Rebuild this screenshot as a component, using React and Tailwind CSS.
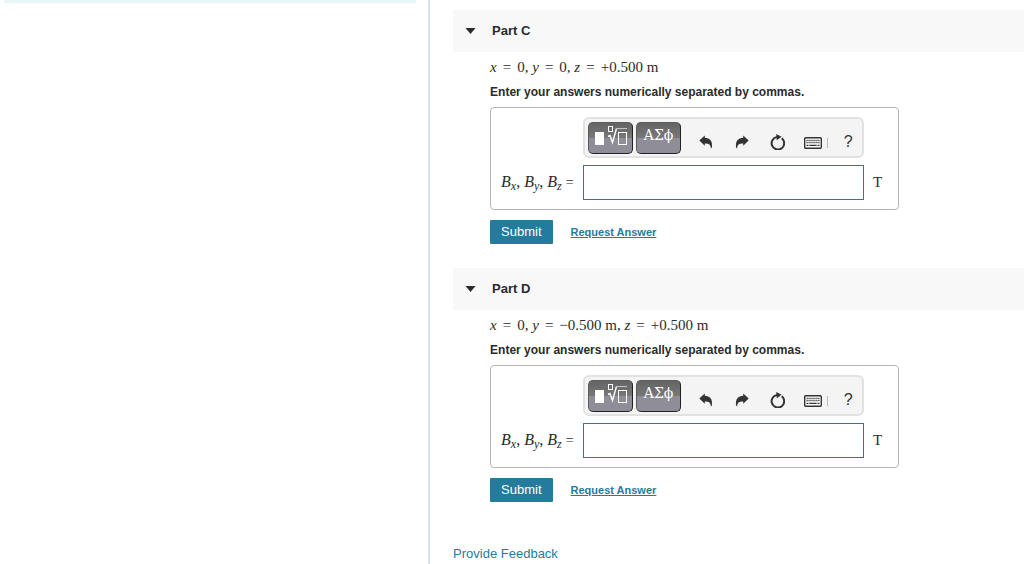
import { useState } from 'react'

const parts = [
  {
    id: 'c',
    title: 'Part C',
    given: [
      { name: 'x', value: '0' },
      { name: 'y', value: '0' },
      { name: 'z', value: '+0.500 m' },
    ],
  },
  {
    id: 'd',
    title: 'Part D',
    given: [
      { name: 'x', value: '0' },
      { name: 'y', value: '−0.500 m' },
      { name: 'z', value: '+0.500 m' },
    ],
  },
]

function UndoIcon({ className }) {
  return (
    <svg viewBox="0 0 14 14" className={className} fill="currentColor" aria-hidden="true">
      <path d="M.3 5.400 5.800.4v2.400c5 .1 8 3.200 7.100 9.700l-1.100 1C12 9.800 9.800 8.500 5.800 8.500v2.200z" />
    </svg>
  )
}

function ResetIcon() {
  return (
    <svg viewBox="0 0 16 16" className="size-4" aria-hidden="true">
      <path d="M12.700 4.200A6.300 6.300 0 1 1 8 3" fill="none" stroke="currentColor" strokeWidth="2" />
      <path d="M7.200 0 12.600 2.800 7.800 6.300z" fill="currentColor" />
    </svg>
  )
}

function KeyboardIcon() {
  return (
    <svg viewBox="0 0 18 12" className="h-3 w-[18px]" aria-hidden="true">
      <rect x=".7" y=".7" width="16.600" height="10.600" rx="1" fill="#fff" stroke="currentColor" strokeWidth="1.400" />
      <path
        d="M2.500 3.500h13M2.500 5.700h13"
        stroke="currentColor"
        strokeWidth="1.300"
        strokeDasharray="1.200 .760"
      />
      <path d="M2.500 8.400h2M5.300 8.400h7.400M13.500 8.400h2" stroke="currentColor" strokeWidth="1.300" />
    </svg>
  )
}

function TemplateIcon() {
  return (
    <svg viewBox="0 0 34 22" className="h-[22px] w-[34px]" aria-hidden="true">
      <rect x="1" y="7" width="9" height="13" fill="#fff" />
      <g fill="none" stroke="#fff">
        <rect x="14.500" y="1.500" width="4" height="5" />
        <path d="M14 11.500 16 10.500 18.500 17.500 22.500 3.500" strokeWidth="1.400" />
        <path d="M22.500 3.500H33" stroke="#c4c4c4" />
        <rect x="24.500" y="7.500" width="8" height="12" />
      </g>
    </svg>
  )
}

function ToolButton({ label, children }) {
  return (
    <button type="button" aria-label={label} className="flex size-6 items-center justify-center text-[#333]">
      {children}
    </button>
  )
}

const paletteButton =
  'flex h-8 w-[45px] justify-center rounded-[5px] border border-[#5c5c5c] border-r-[#222] border-b-[#222] bg-linear-to-b from-[#646464] from-0% via-[#787878] via-50% to-[#8f8d98] to-50% text-white'

function Toolbar() {
  return (
    <div className="flex h-[41px] items-center rounded-md border-2 border-[#e2e2e2] bg-[#f4f4f4] pl-[3px]">
      <div className="flex gap-[3px]">
        <button type="button" aria-label="Templates" className={`${paletteButton} pt-[2px]`}>
          <TemplateIcon />
        </button>
        <button type="button" className={`${paletteButton} font-['DejaVu_Serif',serif] text-sm leading-6`}>
          ΑΣϕ
        </button>
      </div>
      <div className="flex grow items-center justify-between pt-[8px] pr-[2px] pl-[13px]">
        <ToolButton label="Undo">
          <UndoIcon className="size-[14px]" />
        </ToolButton>
        <ToolButton label="Redo">
          <UndoIcon className="size-[14px] -scale-x-100" />
        </ToolButton>
        <ToolButton label="Reset">
          <ResetIcon />
        </ToolButton>
        <div className="-mr-[3px] flex items-center gap-[2px] pt-[2px]">
          <ToolButton label="Keyboard shortcuts">
            <KeyboardIcon />
          </ToolButton>
          <span className="h-[10px] w-px bg-[#bbb]" />
        </div>
        <ToolButton label="Help">
          <span className="font-['Liberation_Sans',sans-serif] text-base">?</span>
        </ToolButton>
      </div>
    </div>
  )
}

function Given({ items }) {
  return (
    <p className="font-['Liberation_Serif',serif] text-[15px] leading-5">
      {items.map((item, i) => (
        <span key={item.name}>
          <i>{item.name}</i>
          <span className="mx-[6px]">=</span>
          {item.value}
          {i < items.length - 1 && ', '}
        </span>
      ))}
    </p>
  )
}

function Component({ axis }) {
  return (
    <i>
      B<sub className="text-xs">{axis}</sub>
    </i>
  )
}

function Part({ part }) {
  const [open, setOpen] = useState(true)
  const [answer, setAnswer] = useState('')
  const inputId = `answer-${part.id}`

  return (
    <section className="mb-6">
      <h2 className="bg-[#f8f8f8]">
        <button
          type="button"
          aria-expanded={open}
          onClick={() => setOpen(!open)}
          className="flex h-[42px] w-full items-center gap-4 pl-3 text-[13px] font-bold"
        >
          <svg viewBox="0 0 11 6" className={open ? 'h-[6px] w-[11px]' : 'h-[6px] w-[11px] -rotate-90'} aria-hidden="true">
            <path d="M.5 0h10l-5 6z" fill="currentColor" />
          </svg>
          {part.title}
        </button>
      </h2>
      {open && (
        <div className="pt-[5px] pl-[37px]">
          <Given items={part.given} />
          <p className="my-[5px] text-xs leading-5 font-bold">
            Enter your answers numerically separated by commas.
          </p>
          <div className="grid w-fit grid-cols-[82px_281px_auto] items-center gap-y-[7px] rounded border border-[#b5b5b5] py-[9px] pr-4 pl-[10px]">
            <div className="col-start-2">
              <Toolbar />
            </div>
            <label
              htmlFor={inputId}
              className="col-start-1 font-['Liberation_Serif',serif] text-base leading-5 whitespace-nowrap"
            >
              <Component axis="x" />, <Component axis="y" />, <Component axis="z" />{' '}
              <span className="text-sm">=</span>
            </label>
            <div className="border border-[#257b9c]">
              <input
                id={inputId}
                type="text"
                value={answer}
                onChange={(e) => setAnswer(e.target.value)}
                className="block h-[33px] w-full bg-white px-2"
              />
            </div>
            <span className="pl-[9px] font-['Liberation_Serif',serif] text-[15px]">T</span>
          </div>
          <div className="mt-[10px] flex items-center gap-[18px]">
            <button type="submit" className="h-6 rounded-[1px] bg-[#257b9c] px-[11px] text-[13px] text-white">
              Submit
            </button>
            <a href="#answer" className="text-[11px] font-bold text-[#257b9c] underline">
              Request Answer
            </a>
          </div>
        </div>
      )}
    </section>
  )
}

export default function App() {
  return (
    <div className="flex min-h-screen bg-white font-['Liberation_Sans',Arial,sans-serif] text-[#2b2b2b]">
      <aside className="w-[42%] shrink-0 border-r-2 border-[#d6e0ee] pr-3 pl-1">
        <div className="h-[3px] bg-[#e6f7f6]" />
      </aside>
      <main className="grow pt-[10px] pl-[23px]">
        {parts.map((part) => (
          <Part key={part.id} part={part} />
        ))}
        <a href="#feedback" className="mt-[42px] block text-[13px] leading-5 text-[#257b9c]">
          Provide Feedback
        </a>
      </main>
    </div>
  )
}
